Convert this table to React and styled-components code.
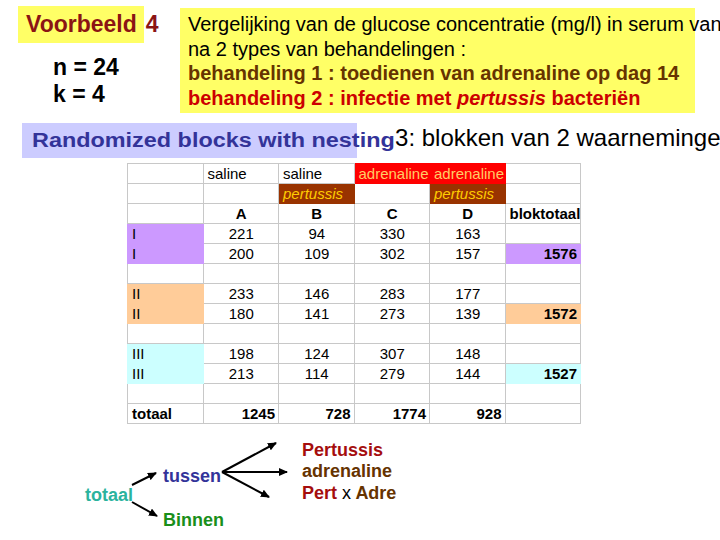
import React from "react";
import styled, { createGlobalStyle } from "styled-components";

const GlobalStyle = createGlobalStyle`
  html, body {
    margin: 0;
    padding: 0;
    background: #ffffff;
  }
  body {
    width: 720px;
    height: 540px;
    overflow: hidden;
    font-family: "Liberation Sans", Arial, sans-serif;
  }
`;

const LAV = "#cc99ff";
const PEACH = "#ffcc99";
const CYAN = "#ccffff";
const RED = "#ff0000";
const BROWN = "#993300";

const rows = [
  [{}, { t: "saline" }, { t: "saline" }, { t: "adrenaline", bg: RED, color: "#ffcc66" }, { t: "adrenaline", bg: RED, color: "#ffcc66" }, {}],
  [{}, {}, { t: "pertussis", bg: BROWN, color: "#ffcc00", italic: true }, {}, { t: "pertussis", bg: BROWN, color: "#ffcc00", italic: true }, {}],
  [{}, { t: "A", bold: true, align: "center" }, { t: "B", bold: true, align: "center" }, { t: "C", bold: true, align: "center" }, { t: "D", bold: true, align: "center" }, { t: "bloktotaal", bold: true }],
  [{ t: "I", bg: LAV }, "221", "94", "330", "163", {}],
  [{ t: "I", bg: LAV }, "200", "109", "302", "157", { t: "1576", bg: LAV, bold: true, align: "right" }],
  [{}, {}, {}, {}, {}, {}],
  [{ t: "II", bg: PEACH }, "233", "146", "283", "177", {}],
  [{ t: "II", bg: PEACH }, "180", "141", "273", "139", { t: "1572", bg: PEACH, bold: true, align: "right" }],
  [{}, {}, {}, {}, {}, {}],
  [{ t: "III", bg: CYAN }, "198", "124", "307", "148", {}],
  [{ t: "III", bg: CYAN }, "213", "114", "279", "144", { t: "1527", bg: CYAN, bold: true, align: "right" }],
  [{}, {}, {}, {}, {}, {}],
  [
    { t: "totaal", bold: true },
    { t: "1245", bold: true, align: "right" },
    { t: "728", bold: true, align: "right" },
    { t: "1774", bold: true, align: "right" },
    { t: "928", bold: true, align: "right" },
    {},
  ],
];

export default function App() {
  return (
    <>
      <GlobalStyle />
      <Slide>
        <TopRow>
          <Intro>
            <TitleLine>
              <TitleBox>Voorbeeld</TitleBox>4
            </TitleLine>
            <Params>
              <div>n = 24</div>
              <div>k = 4</div>
            </Params>
          </Intro>
          <Question>
            <Line>Vergelijking van de glucose concentratie (mg/l) in serum van</Line>
            <Line>na 2 types van behandelingen :</Line>
            <Line $bold $color="#663300">
              behandeling 1 : toedienen van adrenaline op dag 14
            </Line>
            <Line $bold $color="#cc0000">
              behandeling 2 : infectie met <em>pertussis</em> bacteriën
            </Line>
          </Question>
        </TopRow>

        <Subtitle>
          <Method>Randomized blocks with nesting</Method>
          <Blocks>3: blokken van 2 waarnemingen</Blocks>
        </Subtitle>

        <Grid>
          <tbody>
            {rows.map((row, i) => (
              <tr key={i}>
                {row.map((c, j) => {
                  const cell = typeof c === "string" ? { t: c, align: "center" } : c;
                  return (
                    <Cell
                      key={j}
                      $bg={cell.bg}
                      $color={cell.color}
                      $bold={cell.bold}
                      $italic={cell.italic}
                      $align={cell.align}
                    >
                      {cell.t || ""}
                    </Cell>
                  );
                })}
              </tr>
            ))}
          </tbody>
        </Grid>

        <Diagram>
          <Arrows width="720" height="110">
            <defs>
              <marker id="head" markerWidth="9" markerHeight="8" refX="8" refY="4" orient="auto" markerUnits="userSpaceOnUse">
                <path d="M0,0 L9,4 L0,8 z" fill="#000" />
              </marker>
            </defs>
            <line x1="132" y1="56" x2="156" y2="44" stroke="#000" strokeWidth="2" markerEnd="url(#head)" />
            <line x1="132" y1="73" x2="157" y2="87" stroke="#000" strokeWidth="2" markerEnd="url(#head)" />
            <line x1="222" y1="43" x2="276" y2="14" stroke="#000" strokeWidth="2" markerEnd="url(#head)" />
            <line x1="222" y1="43" x2="287" y2="43" stroke="#000" strokeWidth="2" markerEnd="url(#head)" />
            <line x1="222" y1="43" x2="269" y2="68" stroke="#000" strokeWidth="2" markerEnd="url(#head)" />
          </Arrows>
          <Node $x={85} $y={57} $color="#2bb39e">totaal</Node>
          <Node $x={163} $y={38} $color="#333399">tussen</Node>
          <Node $x={163} $y={82} $color="#1a8f1a">Binnen</Node>
          <Node $x={302} $y={12} $color="#a50d0d">Pertussis</Node>
          <Node $x={302} $y={33} $color="#663300">adrenaline</Node>
          <Node $x={302} $y={55} $color="#a50d0d">
            Pert <Times>x</Times> <Brown>Adre</Brown>
          </Node>
        </Diagram>
      </Slide>
    </>
  );
}

const Slide = styled.div`
  width: 720px;
  height: 540px;
  overflow: hidden;
  display: flex;
  flex-direction: column;
  padding-top: 6px;
  box-sizing: border-box;
`;

const TopRow = styled.div`
  display: flex;
  align-items: flex-start;
`;

const Intro = styled.div`
  width: 162px;
  padding-left: 18px;
  display: flex;
  flex-direction: column;
`;

const TitleLine = styled.div`
  display: flex;
  align-items: center;
  font-size: 23px;
  font-weight: bold;
  color: #8b1414;
`;

const TitleBox = styled.span`
  background: #ffff66;
  height: 37px;
  line-height: 37px;
  padding: 0 7px 0 8px;
  margin-right: 2px;
`;

const Params = styled.div`
  margin: 11px 0 0 35px;
  font-size: 23px;
  font-weight: bold;
  line-height: 27px;
  color: #000;
`;

const Question = styled.div`
  margin-top: 2px;
  width: 507px;
  background: #ffff66;
  padding: 4px 0 3px 8px;
  font-size: 20px;
  line-height: 24.6px;
  white-space: nowrap;
`;

const Line = styled.div`
  color: ${(p) => p.$color || "#000"};
  font-weight: ${(p) => (p.$bold ? "bold" : "normal")};
`;

const Subtitle = styled.div`
  margin: 10px 0 0 22px;
  width: 335px;
  height: 35px;
  padding-left: 10px;
  box-sizing: border-box;
  background: #ccccff;
  display: flex;
  align-items: center;
  white-space: nowrap;
`;

const Method = styled.span`
  display: inline-block;
  font-size: 20px;
  font-weight: bold;
  color: #333399;
  transform: scaleX(1.17);
  transform-origin: left center;
  margin-right: 53px;
`;

const Blocks = styled.span`
  font-size: 24px;
  color: #000;
  margin-bottom: 6px;
`;

const Grid = styled.table`
  margin: 5px 0 0 127px;
  border-collapse: collapse;
  table-layout: fixed;
  width: 454px;
  font-size: 15px;
`;

const Cell = styled.td`
  height: 19px;
  line-height: 19px;
  padding: 0 3px 0 4px;
  border: 1px solid ${(p) => p.$bg || "#c8c8c8"};
  background: ${(p) => p.$bg || "transparent"};
  color: ${(p) => p.$color || "#000"};
  text-align: ${(p) => p.$align || "left"};
  font-weight: ${(p) => (p.$bold ? "bold" : "normal")};
  font-style: ${(p) => (p.$italic ? "italic" : "normal")};
  white-space: nowrap;
  overflow: hidden;
`;

const Diagram = styled.div`
  position: relative;
  margin-top: 5px;
  height: 110px;
`;

const Arrows = styled.svg`
  position: absolute;
  left: 0;
  top: 0;
`;

const Node = styled.div`
  position: absolute;
  left: ${(p) => p.$x}px;
  top: ${(p) => p.$y}px;
  font-size: 18px;
  font-weight: bold;
  line-height: 1;
  color: ${(p) => p.$color};
  white-space: nowrap;
`;

const Times = styled.span`
  font-weight: normal;
  color: #000;
`;

const Brown = styled.span`
  color: #663300;
`;
